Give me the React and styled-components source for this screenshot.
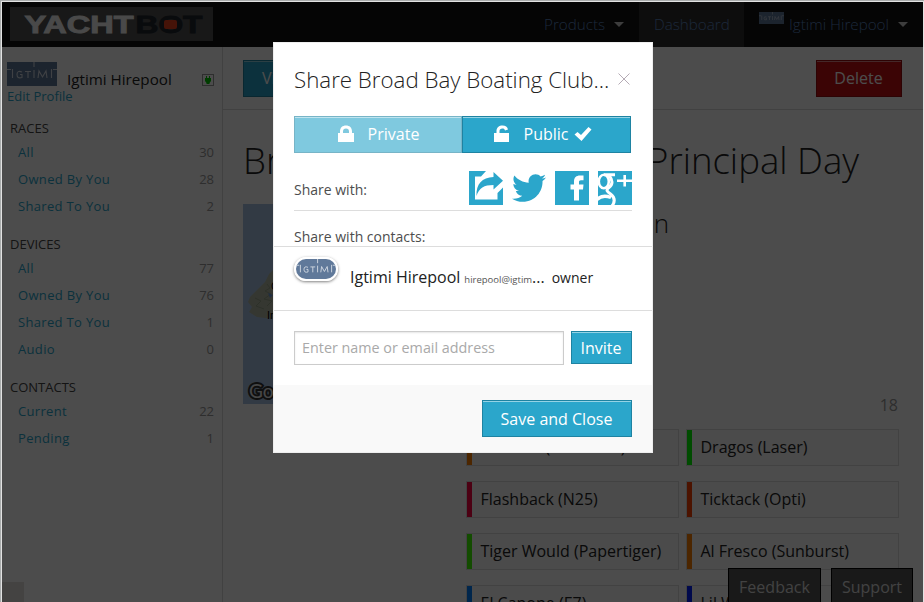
import React from 'react';
import styled, { createGlobalStyle } from 'styled-components';
import { FaTwitter } from 'react-icons/fa';

const Global = createGlobalStyle`
  * { box-sizing: border-box; }
  html, body { margin: 0; padding: 0; overflow: hidden; }
  body { font-family: 'Open Sans', sans-serif; font-size: 14px; color: #222; }
`;

const Window = styled.div`
  width: 924px; height: 602px; overflow: hidden;
  padding: 2px 1px 0 2px;
  background: #e2e2e2;
  box-shadow: inset 1px 1px 0 #a9acac;
`;
const Page = styled.div`
  position: relative; width: 921px; height: 600px; overflow: hidden;
  background: #fff; display: flex; flex-direction: column;
`;
const Header = styled.header`
  height: 45px; flex: none; background: #111;
  display: flex; justify-content: space-between; align-items: stretch;
`;
const LogoBox = styled.div`
  width: 203px; height: 34px; margin: 5px 0 0 8px; background: #505050;
`;
const Nav = styled.nav` display: flex; `;
const NavItem = styled.a`
  width: ${p => p.$w}px; padding-left: ${p => p.$pl}px;
  background: ${p => (p.$active ? '#2e2e2e' : 'transparent')};
  color: #5c86c0; font-size: 15.2px; font-weight: 300; line-height: 45px;
  display: flex; white-space: nowrap;
`;
const Caret = styled.i`
  margin: 20px 0 0 9px; width: 0; height: 0;
  border: 5px solid transparent; border-top-color: #ccc; border-bottom: 0;
`;
const NavAvatar = styled.div` margin: 10px 5px 0 0; width: 25px; height: 12px; display: flex; `;

const Body = styled.div` display: flex; flex: 1; min-height: 0; `;
const Sidebar = styled.aside`
  width: 221px; flex: none; border-right: 1px solid #d9d9d9;
`;
const Profile = styled.div` height: 71px; padding: 15px 8px 0 5px; `;
const ProfileRow = styled.div` display: flex; height: 24px; `;
const ProfileName = styled.div`
  margin-left: 10px; flex: 1; font-size: 15.2px; line-height: 35px;
`;
const PlugBox = styled.div` margin-top: 12px; width: 12px; height: 12px; border: 1px solid #999; display: flex; `;
const Edit = styled.a` display: block; font-size: 13px; line-height: 21px; color: #2ba6cb; `;
const Group = styled.section` margin-bottom: 14px; `;
const GroupTitle = styled.h6`
  margin: 0; height: 21px; padding-left: 8px; font-size: 13px; font-weight: 400; line-height: 21px; color: #444;
`;
const Entry = styled.div`
  height: 27px; line-height: 27px; padding: 0 8px 0 16px; font-size: 13px;
  letter-spacing: .33px; display: flex; justify-content: space-between; color: #2ba6cb;
`;
const Count = styled.span` color: #999; letter-spacing: 0; `;

const Main = styled.main` flex: 1; min-width: 0; `;
const Toolbar = styled.div`
  height: 63px; border-bottom: 1px solid #d9d9d9; padding: 13px 21px 0 20px;
  display: flex; justify-content: space-between;
`;
const Button = styled.button`
  margin: 0; padding: ${p => (p.$low ? '1px 1px 0 0' : '0 1px 1px 0')};
  width: ${p => p.$w}px; height: ${p => p.$h || 37}px;
  border: 1px solid ${p => (p.$danger ? '#970b0e' : '#1e83a2')};
  background: ${p => (p.$danger ? '#c60f13' : '#2ba6cb')};
  box-shadow: inset 0 1px 0 rgba(255,255,255,.5);
  color: #fff; font: 400 16px 'Open Sans', sans-serif; line-height: 1;
  opacity: ${p => (p.$muted ? 0.6 : 1)};
  display: flex; align-items: center; justify-content: center; white-space: nowrap;
`;
const Title = styled.h1`
  margin: 23px 0 0 20px; height: 54px; font-size: 36.6px; line-height: 54px; font-weight: 300;
  display: flex; white-space: nowrap;
`;
const TitleLead = styled.span` width: 404px; overflow: hidden; `;
const Split = styled.div` display: flex; padding: 17px 25px 0 20px; `;
const MapBox = styled.div` width: 200px; height: 200px; flex: none; background: #a9c4e4; `;
const Details = styled.div` flex: 1; margin-left: 23px; `;
const Place = styled.h3`
  margin: 0; width: 203px; height: 40px; text-align: right;
  font-size: 26px; line-height: 38px; font-weight: 300; white-space: nowrap;
`;
const Total = styled.div` margin-top: 149px; height: 23px; padding-right: 1px; text-align: right; line-height: 25px; font-size: 16px; color: #999; `;
const Boats = styled.div` margin-top: 13px; display: grid; grid-template-columns: 213px 213px; gap: 15px 7px; `;
const Boat = styled.div`
  height: 37px; border: 1px solid #ddd; background: #fafafa; line-height: 35px; font-size: 16px;
  display: flex; white-space: nowrap; overflow: hidden; color: #222;
`;
const Stripe = styled.i` width: 5px; margin-right: 8.5px; flex: none; background: ${p => p.$c}; `;

const Corner = styled.div` position: absolute; left: 0; bottom: 0; width: 22px; height: 20px; background: #e4e1dc; `;
const Tabs = styled.div` position: absolute; right: 10px; bottom: 0; display: flex; gap: 10px; `;
const Tab = styled.div`
  width: ${p => p.$w}px; height: 34px; background: #555; border: 1px solid #000; border-bottom: 0;
  color: #ddd; text-align: center; font-size: 16px; line-height: 36px;
`;

const Overlay = styled.div`
  position: absolute; inset: 0; background: rgba(0,0,0,.7); padding: 40px 0 0 271px;
`;
const Modal = styled.div`
  width: 380px; height: 411px; background: #fff; border: 1px solid #eee;
  display: flex; flex-direction: column;
`;
const ModalHead = styled.div` height: 73px; padding: 16px 22px 0 20px; display: flex; justify-content: space-between; `;
const ModalTitle = styled.h2` margin: 0; font-weight: 300; font-size: 22.3px; line-height: 42px; color: #222; white-space: nowrap; `;
const CloseIcon = styled.svg` margin-top: 14px; width: 12px; height: 12px; flex: none; `;
const Toggle = styled.div` display: flex; margin: 0 20px; `;
const Share = styled.div`
  margin: 0 20px; height: 58px; border-bottom: 1px solid #ddd; padding-top: 18px;
  display: flex; justify-content: space-between; line-height: 38px; color: #4d4d4d;
`;
const Socials = styled.div` display: flex; gap: 9px; `;
const SocialIcon = styled.svg` width: 34px; height: 34px; display: block; `;
const Bird = styled(FaTwitter)` width: 34px; height: 34px; `;
const ContactsLabel = styled.div` height: 36px; padding: 9px 20px 0; line-height: 33px; color: #4d4d4d; border-bottom: 1px solid #ddd; `;
const Contact = styled.div`
  height: 64px; border-bottom: 1px solid #ddd; padding-left: 20px; display: flex; white-space: nowrap; line-height: 61px;
`;
const Avatar = styled.div`
  margin: 10px 12px 0 0; width: 44px; height: 24px; border: 2px solid #fff; border-radius: 12px; overflow: hidden;
  box-shadow: 0 1px 3px rgba(0,0,0,.5); display: flex;
`;
const Name = styled.span` font-size: 16px; `;
const Mail = styled.span` font-size: 9.5px; margin: 2px 0 0 4px; color: #555; `;
const Dots = styled.span` font-size: 16px; margin-right: 7px; `;
const Role = styled.span` font-size: 14px; `;
const InviteRow = styled.div` height: 74px; padding: 20px 20px 0; display: flex; gap: 7px; `;
const Field = styled.input`
  width: 270px; height: 34px; border: 1px solid #ccc; padding: 0 7px 2px; border-radius: 0; outline: 0;
  box-shadow: inset 0 1px 2px rgba(0,0,0,.1); font: 400 14.35px 'Open Sans', sans-serif;
  &::placeholder { color: #a9a9a9; opacity: 1; }
`;
const Footer = styled.div` flex: 1; background: #f9f9f9; padding: 15px 20px 0; display: flex; justify-content: flex-end; `;
const BtnIcon = styled.svg` width: 18px; height: 18px; margin: ${p => p.$m}; `;

const Igtimi = ({ w, h, bg = '#60799a', fg = '#d3dae3' }) => (
  <svg width={w} height={h} viewBox="0 0 50 24" preserveAspectRatio="none">
    <rect width="50" height="24" fill={bg} />
    <g fill="none" stroke={fg} strokeWidth="1.1">
      <path d="M0 7.5H4M5.5 7V16M15 10Q10 8 10 12.5Q10 17 15 15.5V12.5H13M18 9.5H24M21 9.5V16M27 0V5M27 8V16M31 16L32 9L35.5 15L39 9L40 16M44.5 7V16M46 7.5H50" />
    </g>
  </svg>
);

const Logo = () => (
  <svg width="203" height="34" viewBox="0 0 203 34">
    <g fontFamily="Liberation Sans, sans-serif" fontWeight="700" fontSize="24.5" strokeWidth=".9">
      <text x="14.5" y="26" fill="#f4f4f4" stroke="#f4f4f4" textLength="109" lengthAdjust="spacingAndGlyphs">YACHT</text>
      <text x="125.5" y="26" fill="#20252c" stroke="#20252c" textLength="67" lengthAdjust="spacingAndGlyphs">BOT</text>
    </g>
    <rect x="154" y="13" width="13" height="9" rx="2" fill="#e8401c" />
  </svg>
);

const MapArt = () => (
  <svg width="200" height="200" viewBox="0 0 200 200">
    <path d="M34 62L26 70L22 78L14 86L7 93L5 98L9 103L6 108L14 113L30 115L60 120V55Z" fill="#b3b8a6" />
    <path d="M24 80l3 4-5 3 6 3-7 5 8 2-5 5M12 94l6 3-5 5 8 3" fill="none" stroke="#97a58b" strokeWidth="1" />
    <path d="M25 89l5 2-3 3z" fill="#6d9ad8" />
    <text x="28" y="86" fontFamily="Roboto, sans-serif" fontSize="11">Queenstown</text>
    <text x="24" y="115" fontFamily="Roboto, sans-serif" fontSize="11">Invercargill</text>
    <text x="6" y="194" fontFamily="Lato, sans-serif" fontWeight="400" fontSize="19" fill="#eee" stroke="#333" strokeWidth="4" paintOrder="stroke">Google</text>
  </svg>
);

const groups = [
  ['RACES', [['All', 30], ['Owned By You', 28], ['Shared To You', 2]]],
  ['DEVICES', [['All', 77], ['Owned By You', 76], ['Shared To You', 1], ['Audio', 0]]],
  ['CONTACTS', [['Current', 22], ['Pending', 1]]],
];
const boats = [
  ['#ff7f00', 'Corsairs (Trailer 76)'], ['#00ff00', 'Dragos (Laser)'],
  ['#ff0040', 'Flashback (N25)'], ['#ff4000', 'Ticktack (Opti)'],
  ['#40ff00', 'Tiger Would (Papertiger)'], ['#ff8000', 'Al Fresco (Sunburst)'],
  ['#0080ff', 'El Capone (E7)'], ['#0020ff', 'Lil Wave (Opti)'],
];

export default function App() {
  return (
    <Window>
      <Global />
      <Page>
        <Header>
          <LogoBox><Logo /></LogoBox>
          <Nav>
            <NavItem $w={95} $pl={0}>Products<Caret /></NavItem>
            <NavItem $w={105} $pl={15} $active>Dashboard</NavItem>
            <NavItem $w={179} $pl={15}>
              <NavAvatar><Igtimi w={25} h={12} /></NavAvatar>Igtimi Hirepool<Caret />
            </NavItem>
          </Nav>
        </Header>
        <Body>
          <Sidebar>
            <Profile>
              <ProfileRow>
                <Igtimi w={50} h={24} />
                <ProfileName>Igtimi Hirepool</ProfileName>
                <PlugBox>
                  <svg width="10" height="10" viewBox="0 0 10 10"><path d="M3 1h1v2h2V1h1v2h1v3L6.5 8v1h-3V8L2 6V3h1z" fill="#0c0" /></svg>
                </PlugBox>
              </ProfileRow>
              <Edit>Edit Profile</Edit>
            </Profile>
            {groups.map(([name, items]) => (
              <Group key={name}>
                <GroupTitle>{name}</GroupTitle>
                {items.map(([label, n]) => <Entry key={label}>{label}<Count>{n}</Count></Entry>)}
              </Group>
            ))}
          </Sidebar>
          <Main>
            <Toolbar><Button $w={74}>View</Button><Button $w={86} $danger>Delete</Button></Toolbar>
            <Title><TitleLead>Broad Bay Boating Club</TitleLead>Principal Day</Title>
            <Split>
              <MapBox><MapArt /></MapBox>
              <Details>
                <Place>Dunedin</Place>
                <Total>18</Total>
                <Boats>{boats.map(([c, n]) => <Boat key={n}><Stripe $c={c} />{n}</Boat>)}</Boats>
              </Details>
            </Split>
          </Main>
        </Body>
        <Corner />
        <Tabs><Tab $w={93}>Feedback</Tab><Tab $w={82}>Support</Tab></Tabs>
        <Overlay>
          <Modal>
            <ModalHead>
              <ModalTitle>Share Broad Bay Boating Club...</ModalTitle>
              <CloseIcon viewBox="0 0 12 12"><path d="M.5 .5L11.5 11.5M11.5 .5L.5 11.5" stroke="#b5abb5" strokeWidth="1" /></CloseIcon>
            </ModalHead>
            <Toggle>
              <Button $w={168} $muted>
                <BtnIcon viewBox="0 0 18 18" $m="0 13px 0 1px"><path d="M1 8H3V6.5C3 2.5 5.5 .5 9 .5S15 2.5 15 6.5V8H17V17H1ZM6 8H12V6.5C12 4.5 11 3.5 9 3.5S6 4.5 6 6.5Z" fill="#fff" fillRule="evenodd" /></BtnIcon>
                Private
              </Button>
              <Button $w={169}>
                <BtnIcon viewBox="0 0 18 18" $m="0 13px 0 -7px"><path d="M1 8H3.5V6C3.5 2.5 6 .5 9.5 .5C12.5 .5 14.5 2 15 4.5L12 5.5C11.5 4 10.8 3.5 9.5 3.5C7.5 3.5 6.5 4.5 6.5 6V8H16V17H1Z" fill="#fff" /></BtnIcon>
                Public
                <BtnIcon viewBox="0 0 18 18" $m="0 0 0 6px"><path d="M.5 9.5L3.5 7L7 10L14.5 2L17.5 4.5L7.5 16Z" fill="#fff" /></BtnIcon>
              </Button>
            </Toggle>
            <Share>
              Share with:
              <Socials>
                <SocialIcon viewBox="0 0 34 34" fill="#2ba6cb">
                  <path d="M0 0H17L12 5.5H6V28.5H28.5V22L34 16.5V34H0Z" />
                  <path d="M7.5 25C7 13 13 6.5 24.5 6V1L34 9.7L24.5 18.5V14C15 14 10 17 7.5 25Z" />
                </SocialIcon>
                <Bird color="#2ba6cb" />
                <SocialIcon viewBox="0 0 34 34">
                  <path d="M0 0H34V34H0Z" fill="#2ba6cb" />
                  <path d="M19 29.5V18.5H15.5V13.5H19V10.5C19 6.5 21.3 4.5 25 4.5H28.5V9.3H26C24.5 9.3 24 10 24 11.2V13.5H28.5L28 18.5H24V29.5Z" fill="#fff" />
                </SocialIcon>
                <SocialIcon viewBox="0 0 34 34">
                  <path d="M0 0H34V34H0Z" fill="#2ba6cb" />
                  <g fill="none" stroke="#fff" strokeWidth="2.6">
                    <ellipse cx="5.8" cy="10.5" rx="5" ry="6.8" />
                    <path d="M6 3.8H17M11 4.5C15 9 15 13.5 11 16.5C7.5 19 9 20.5 12.5 23C17.5 27 17 31 14 35" strokeWidth="3" />
                    <path d="M-1 28.5C2.5 25 8 24.5 13 26.5" strokeWidth="3.4" />
                    <path d="M19 9.7H34M26.7 4V15.5" />
                  </g>
                </SocialIcon>
              </Socials>
            </Share>
            <ContactsLabel>Share with contacts:</ContactsLabel>
            <Contact>
              <Avatar><Igtimi w={40} h={20} /></Avatar>
              <Name>Igtimi Hirepool</Name><Mail>hirepool@igtim</Mail><Dots>...</Dots><Role>owner</Role>
            </Contact>
            <InviteRow><Field placeholder="Enter name or email address" /><Button $w={61} $h={33} $low>Invite</Button></InviteRow>
            <Footer><Button $w={150} $low>Save and Close</Button></Footer>
          </Modal>
        </Overlay>
      </Page>
    </Window>
  );
}
